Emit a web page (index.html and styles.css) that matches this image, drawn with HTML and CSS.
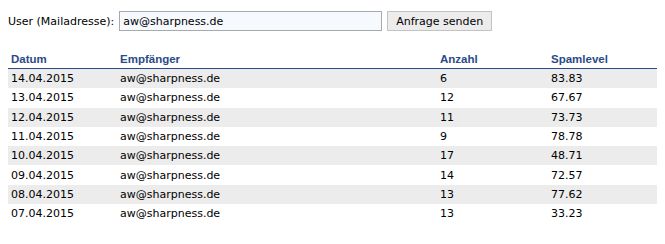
FILE: index.html
```html
<!DOCTYPE html>
<html>
<head>
<meta charset="utf-8">
<link rel="stylesheet" href="styles.css">
</head>
<body>
<form class="query">
  <label class="query-label" for="user">User (Mailadresse):</label>
  <input class="query-input" id="user" type="text" value="aw@sharpness.de">
  <button class="query-button" type="button">Anfrage senden</button>
</form>
<table class="stats">
  <thead>
    <tr><th class="c-date">Datum</th><th class="c-rcpt">Empfänger</th><th class="c-count">Anzahl</th><th class="c-level">Spamlevel</th></tr>
  </thead>
  <tbody>
    <tr><td>14.04.2015</td><td>aw@sharpness.de</td><td>6</td><td>83.83</td></tr>
    <tr><td>13.04.2015</td><td>aw@sharpness.de</td><td>12</td><td>67.67</td></tr>
    <tr><td>12.04.2015</td><td>aw@sharpness.de</td><td>11</td><td>73.73</td></tr>
    <tr><td>11.04.2015</td><td>aw@sharpness.de</td><td>9</td><td>78.78</td></tr>
    <tr><td>10.04.2015</td><td>aw@sharpness.de</td><td>17</td><td>48.71</td></tr>
    <tr><td>09.04.2015</td><td>aw@sharpness.de</td><td>14</td><td>72.57</td></tr>
    <tr><td>08.04.2015</td><td>aw@sharpness.de</td><td>13</td><td>77.62</td></tr>
    <tr><td>07.04.2015</td><td>aw@sharpness.de</td><td>13</td><td>33.23</td></tr>
  </tbody>
</table>
</body>
</html>
```
FILE: styles.css
```css
body {
  margin: 0;
  padding: 11px 8px 0 8px;
  font-family: "DejaVu Sans", Verdana, sans-serif;
  font-size: 11px;
  color: #000;
  background: #fff;
}
.query {
  display: flex;
  align-items: center;
  height: 20px;
  margin: 0;
}
.query-label {
  margin-right: 5px;
}
.query-input {
  box-sizing: border-box;
  width: 263px;
  height: 20px;
  margin: 0 5px 0 0;
  padding: 0 3px;
  border: 1px solid #a9a9a9;
  background: #f6f9fe;
  font: inherit;
  color: #000;
}
.query-button {
  box-sizing: border-box;
  width: 105px;
  height: 20px;
  padding: 0;
  border: 1px solid #c2c2c2;
  background: #ececec;
  font: inherit;
  color: #000;
}
.stats {
  margin-top: 20px;
  width: 649px;
  border-collapse: collapse;
}
.stats th {
  font-family: "Liberation Sans", Arial, sans-serif;
  font-weight: bold;
  font-size: 11.5px;
  color: #2b4a8a;
  text-align: left;
  padding: 0 3px 1px 3px;
  height: 16px;
  border-bottom: 1px solid #2b4a8a;
}
.stats td {
  padding: 0 3px;
  height: 19.3px;
}
.stats tbody tr:nth-child(odd) td {
  background: #ececec;
}
.c-date { width: 103px; }
.c-rcpt { width: 314px; }
.c-count { width: 105px; }
```
